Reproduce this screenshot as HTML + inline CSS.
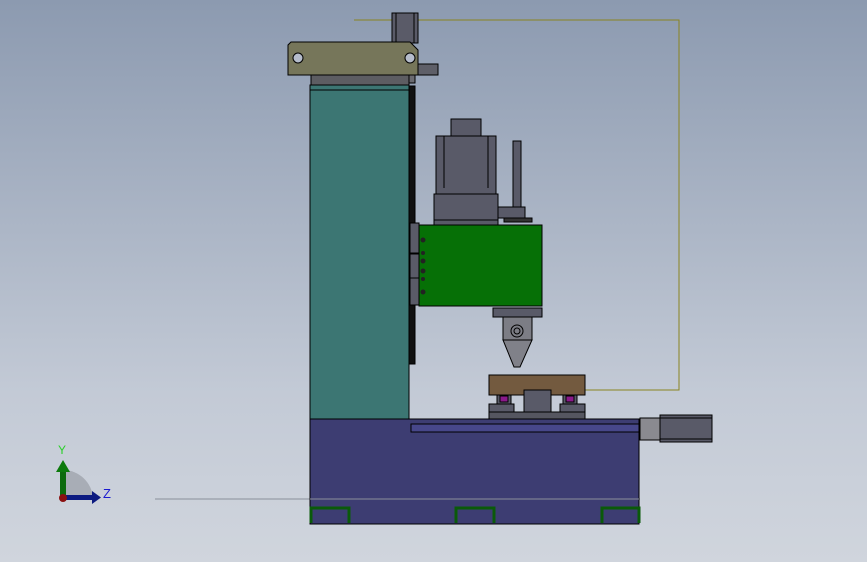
<!DOCTYPE html>
<html><head><style>
html,body{margin:0;padding:0;}
body{width:867px;height:562px;overflow:hidden;background:linear-gradient(#8c9ab0,#c3cad6 70%,#d0d5dd);}
svg{position:absolute;left:0;top:0}
</style></head><body>
<svg width="867" height="562" viewBox="0 0 867 562" font-family="Liberation Sans, sans-serif">
<g stroke="#000" stroke-width="1">
<!-- yellow path -->
<polyline points="354,20 679,20 679,390 585,390" fill="none" stroke="#8a8420"/>
<!-- gray line -->
<line x1="155" y1="499" x2="640" y2="499" stroke="#8a8f99"/>
<!-- rod top -->
<rect x="392" y="13" width="26" height="30" fill="#5a5b68"/>
<line x1="396" y1="13" x2="396" y2="43"/><line x1="414" y1="13" x2="414" y2="43"/>
<rect x="418" y="64" width="20" height="11" fill="#5e5f68"/>
<!-- bracket -->
<path d="M291,42 H410 L418,50 V75 H288 V45 Z" fill="#76765a"/>
<circle cx="298" cy="58" r="5" fill="#b5bccb"/>
<circle cx="410" cy="58" r="5" fill="#b5bccb"/>
<!-- cap -->
<rect x="311" y="75" width="98" height="10" fill="#5d5d62"/>
<rect x="409" y="75" width="6" height="8" fill="#6a6a70"/>
<!-- column -->
<rect x="310" y="85" width="99" height="334" fill="#3c7673"/>
<line x1="310" y1="90" x2="409" y2="90"/>
<rect x="409" y="86" width="6" height="278" fill="#111"/>
<!-- motor -->
<rect x="451" y="119" width="30" height="17" fill="#595a68"/>
<rect x="436" y="136" width="60" height="58" fill="#595a68"/>
<line x1="444" y1="136" x2="444" y2="188"/><line x1="488" y1="136" x2="488" y2="188"/>
<rect x="434" y="194" width="64" height="31" fill="#595a68"/>
<line x1="434" y1="220" x2="498" y2="220"/>
<rect x="513" y="141" width="8" height="66" fill="#595a68"/>
<rect x="498" y="207" width="27" height="11" fill="#595a68"/>
<rect x="504" y="218" width="28" height="4" fill="#333"/>
<!-- side plates -->
<rect x="410" y="223" width="9" height="30" fill="#5a5b68"/>
<rect x="410" y="254" width="9" height="24" fill="#5a5b68"/>
<rect x="410" y="278" width="9" height="27" fill="#5a5b68"/>
<!-- green box -->
<rect x="419" y="225" width="123" height="81" fill="#067006"/>
<g fill="#222" stroke="none">
<circle cx="423" cy="240" r="2.5"/><circle cx="423" cy="253" r="2"/><circle cx="423" cy="261" r="2.5"/><circle cx="423" cy="271" r="2.5"/><circle cx="423" cy="279" r="2"/><circle cx="423" cy="292" r="2.5"/>
</g>
<!-- tool -->
<rect x="493" y="308" width="49" height="9" fill="#595a68"/>
<rect x="503" y="317" width="29" height="23" fill="#7c7d85"/>
<circle cx="517" cy="331" r="6" fill="none"/><circle cx="517" cy="331" r="3" fill="none"/>
<path d="M503,340 H532 L520,367 H514 Z" fill="#808189"/>
<!-- fixture -->
<rect x="489" y="375" width="96" height="20" fill="#735a3f"/>
<rect x="497" y="395" width="14" height="10" fill="#595a68"/>
<rect x="563" y="395" width="14" height="10" fill="#595a68"/>
<rect x="500" y="396" width="8" height="6" fill="#8a1a8a"/>
<rect x="566" y="396" width="8" height="6" fill="#8a1a8a"/>
<rect x="489" y="404" width="25" height="12" fill="#595a68"/>
<rect x="560" y="404" width="25" height="12" fill="#595a68"/>
<rect x="524" y="390" width="27" height="26" fill="#595a68"/>
<rect x="489" y="412" width="96" height="8" fill="#555660"/>
<rect x="489" y="419" width="30" height="6" fill="#595a68"/>
<rect x="555" y="419" width="30" height="6" fill="#595a68"/>
<!-- base -->
<rect x="411" y="421" width="229" height="3" fill="#000"/>
<rect x="310" y="419" width="329" height="105" fill="#3d3d72"/>
<rect x="411" y="424" width="228" height="8" fill="#47478a"/>
<line x1="310" y1="499" x2="639" y2="499" stroke="#8a8f99"/>
<g fill="none" stroke="#0a5a0a" stroke-width="3">
<path d="M311,523 V508 H349 V523"/>
<path d="M456,523 V508 H494 V523"/>
<path d="M602,523 V508 H639 V523"/>
</g>
<!-- right motor -->
<rect x="640" y="418" width="20" height="22" fill="#8a8a90"/>
<rect x="660" y="415" width="52" height="27" fill="#595a68"/>
<line x1="660" y1="418" x2="712" y2="418"/><line x1="660" y1="439" x2="712" y2="439"/>
</g>
<!-- triad -->
<path d="M63,498 V470 A30,30 0 0 1 93,498 Z" fill="#9a9ea6" opacity="0.7"/>
<rect x="60" y="470" width="6" height="29" fill="#0c6a0c"/>
<polygon points="56,472 63,460 70,472" fill="#0c7a0c"/>
<rect x="63" y="495" width="30" height="5" fill="#0c1a80"/>
<polygon points="92,491 101,497.5 92,504" fill="#0c1a80"/>
<circle cx="63" cy="498" r="4" fill="#8a1010"/>
<text x="58" y="454" font-size="12" fill="#2ad02a">Y</text>
<text x="103" y="498" font-size="13" fill="#1a1ad0">Z</text>
</svg>
</body></html>
